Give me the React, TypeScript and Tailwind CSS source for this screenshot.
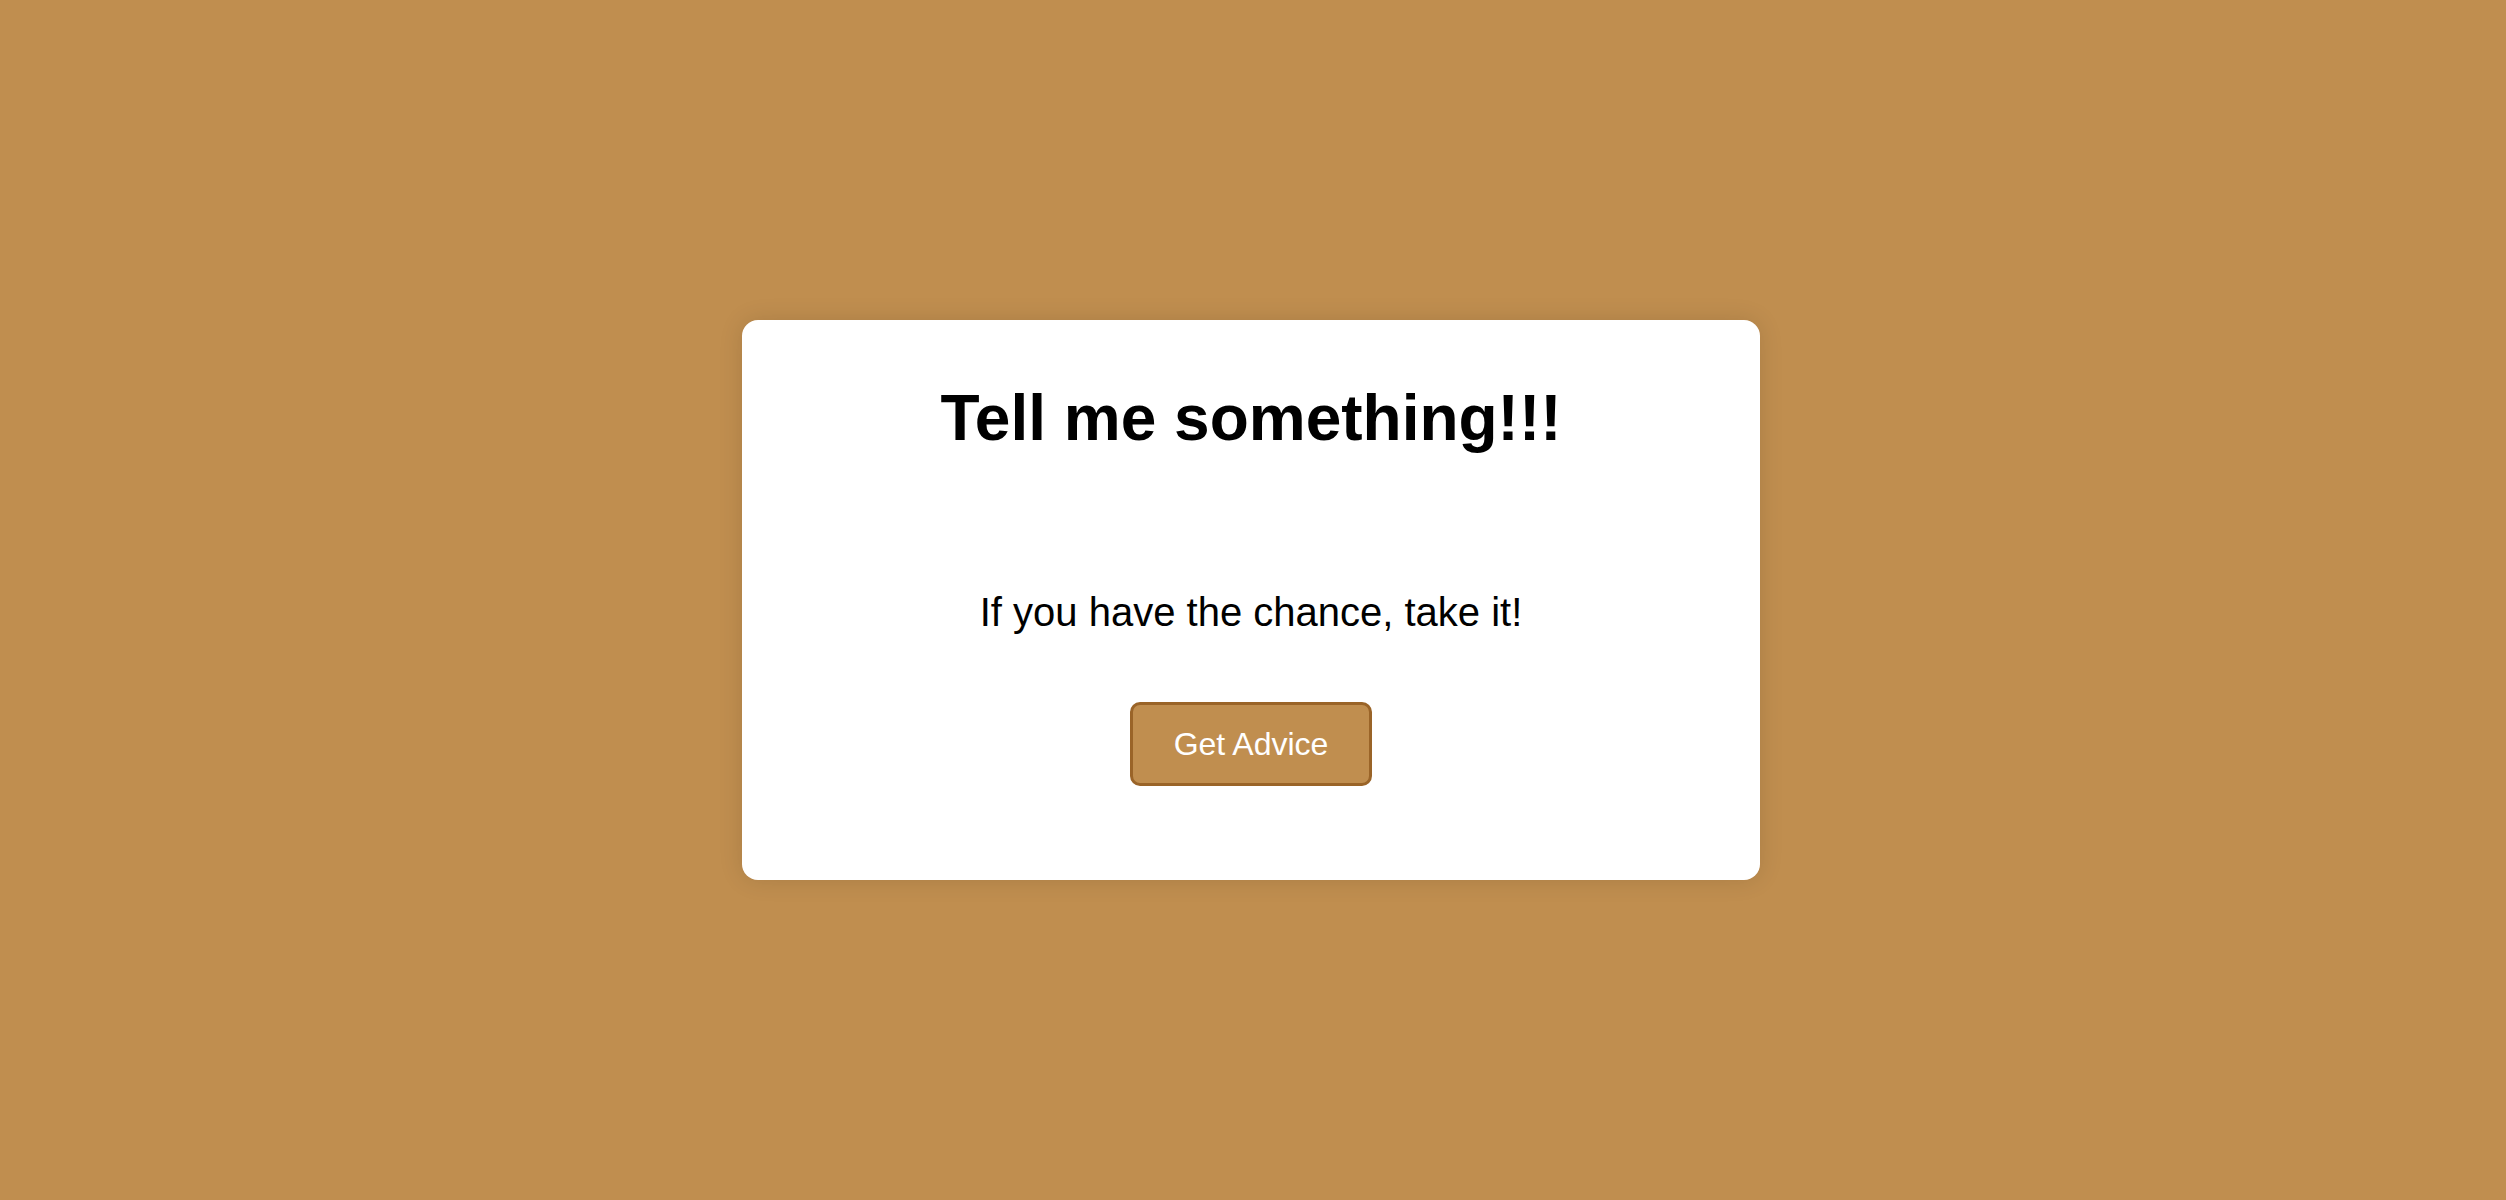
export default function App() {
  return (
    <div className="min-h-screen w-full flex items-center justify-center pr-[4px] bg-[#c08e4f] font-['Liberation_Sans',Arial,sans-serif]">
      {/* Advice card */}
      <div className="w-[1018px] rounded-[16px] bg-white shadow-[0_0_24px_rgba(0,0,0,0.12)] pt-[61px] pb-[94px] flex flex-col items-center">
        <h1 className="text-[64px] leading-[74px] font-bold text-black">Tell me something!!!</h1>
        <p className="mt-[134px] text-[40px] leading-[46px] text-black">If you have the chance, take it!</p>
        <button className="mt-[67px] h-[84px] px-[41px] rounded-[10px] border-[3px] border-[#9a6428] bg-[#c08e4f] text-white text-[32px] leading-[37px]">
          Get Advice
        </button>
      </div>
    </div>
  );
}
